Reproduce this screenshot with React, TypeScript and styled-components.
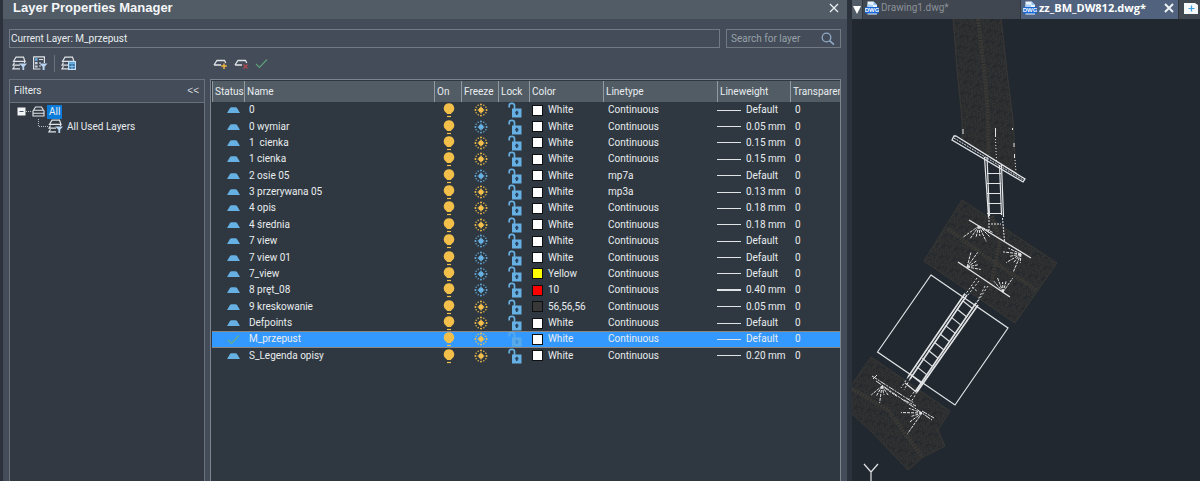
import React from "react";
import styled, { createGlobalStyle } from "styled-components";

const GlobalStyle = createGlobalStyle`
  *, *::before, *::after { box-sizing: border-box; }
  body {
    margin: 0;
    background: #2c323b;
    color: #e9ecef;
    font-family: Roboto, "Liberation Sans", sans-serif;
    font-size: 10px;
    line-height: 16px;
  }
  button, input { font: inherit; color: inherit; }
  svg { display: block; flex: none; }
`;

const Workspace = styled.main`
  display: flex;
  min-height: 100vh;
  padding-left: 3px;
  gap: 5px;
  overflow: hidden;
`;

const Palette = styled.section`
  flex: 1 1 844px;
  min-width: 0;
  display: flex;
  flex-direction: column;
  background: #434c58;
`;

const TitleBar = styled.header`
  display: flex;
  align-items: center;
  justify-content: space-between;
  height: 19px;
  padding: 0 8px 3px 10px;
  background: #515c66;
`;

const Title = styled.h1`
  margin: 0;
  font-family: "Liberation Sans", Arial, sans-serif;
  font-size: 13px;
  line-height: 16px;
  font-weight: 700;
  color: #f4f6f8;
`;

const IconButton = styled.button`
  display: flex;
  align-items: center;
  justify-content: center;
  padding: 0;
  border: 0;
  background: none;
  color: #eef1f4;
`;

const CollapseButton = styled(IconButton)`
  font-family: "Liberation Sans", sans-serif;
  color: #d3d8dc;
`;

const TopRow = styled.div`
  display: flex;
  gap: 6px;
  padding: 10px 6px 0;
`;

const CurrentLayer = styled.output`
  flex: 1;
  height: 19px;
  padding: 1px 1px;
  border: 1px solid #717a83;
`;

const SearchBox = styled.label`
  display: flex;
  align-items: center;
  width: 115px;
  height: 19px;
  padding: 0 5px 0 4px;
  border: 1px solid #717a83;
`;

const SearchInput = styled.input`
  flex: 1;
  min-width: 0;
  padding: 0;
  border: 0;
  outline: 0;
  background: none;
  &::placeholder { color: #98a0a9; opacity: 1; }
`;

const Columns = styled.div<{ $fill?: boolean }>`
  display: grid;
  grid-template-columns: 196px minmax(0, 1fr);
  column-gap: 5px;
  padding: 0 6px;
  flex: ${(p) => (p.$fill ? "1" : "none")};
`;

const ToolGroup = styled.div`
  display: flex;
  align-items: center;
  gap: 6px;
  height: 31px;
  padding-left: 3px;
`;

const Divider = styled.span`
  width: 1px;
  height: 17px;
  background: #68727c;
`;

const FilterPanel = styled.section`
  border: 1px solid #68717a;
  border-bottom: 0;
  background: #323943;
`;

const FilterHead = styled.header`
  display: flex;
  align-items: center;
  justify-content: space-between;
  height: 23px;
  padding: 0 5px 0 4px;
  border-bottom: 1px solid #68717a;
  background: #434c58;
`;

const FilterTitle = styled.h2`
  margin: 0;
  font-size: 10px;
  font-weight: 400;
`;

const Tree = styled.ul`
  margin: 0;
  padding: 1px 0 0 7px;
  list-style: none;
`;

const Branch = styled.ul`
  margin: 0;
  padding: 0 0 0 20px;
  list-style: none;
`;

const TreeRow = styled.div`
  display: flex;
  align-items: center;
  height: 15px;
`;

const NodeLabel = styled.span<{ $selected?: boolean }>`
  margin-left: 2px;
  padding: 0 2px;
  line-height: 14px;
  background: ${(p) => (p.$selected ? "#0c7cdb" : "transparent")};
`;

const GridPanel = styled.section`
  min-width: 0;
  padding: 1px 0 0 1px;
  border: 1px solid #7c858d;
  border-bottom: 0;
  background: #2f3840;
  overflow: hidden;
`;

const LayerTable = styled.table`
  width: 100%;
  height: 283px;
  table-layout: fixed;
  border-collapse: separate;
  border-spacing: 0;
  white-space: nowrap;
`;

const Col = styled.col<{ $w?: number }>`
  width: ${(p) => (p.$w ? `${p.$w}px` : "auto")};
`;

const HeadCell = styled.th`
  height: 21px;
  padding: 0 0 0 2px;
  border-left: 1px solid #929aa1;
  background: #515c65;
  font-weight: 400;
  text-align: left;
  overflow: hidden;
`;

const Cell = styled.td<{ $inset?: number }>`
  padding: 0 0 0 ${(p) => p.$inset ?? 5}px;
  line-height: 16px;
  white-space: pre;
  overflow: hidden;
`;

const Row = styled.tr<{ $current?: boolean }>`
  background: ${(p) => (p.$current ? "#3399ff" : "transparent")};

  ${Cell} {
    box-shadow: ${(p) => (p.$current ? "inset 0 1px #8c8580, inset 0 -1px #8c8580" : "none")};
  }
`;

const Inline = styled.span`
  display: flex;
  align-items: center;
  gap: 5px;
`;

const Swatch = styled.span<{ $color: string }>`
  width: 11px;
  height: 11px;
  border: 1px solid #0d0f11;
  background: ${(p) => p.$color};
`;

const Stroke = styled.span<{ $weight: number }>`
  width: 24px;
  height: ${(p) => p.$weight}px;
  background: #dfe3e6;
`;

const Viewer = styled.section`
  flex: 1 1 348px;
  min-width: 0;
  display: flex;
  flex-direction: column;
  background: #212830;
  overflow: hidden;
`;

const TabBar = styled.nav`
  display: flex;
  gap: 1px;
  height: 19px;
  background: #31373f;
`;

const TabMenu = styled(IconButton)`
  width: 10px;
  background: #515c66;
`;

const Tab = styled.div<{ $active?: boolean }>`
  display: flex;
  align-items: center;
  flex: 0 1 157px;
  min-width: 0;
  padding: 0 4px 3px 2px;
  background: ${(p) => (p.$active ? "#50627e" : "#414750")};
`;

const TabName = styled.button<{ $active?: boolean }>`
  flex: 1;
  display: flex;
  align-items: center;
  gap: 2px;
  padding: 0;
  border: 0;
  background: none;
  font-family: ${(p) => (p.$active ? '"Open Sans"' : "Roboto")}, sans-serif;
  font-size: ${(p) => (p.$active ? 11 : 10)}px;
  line-height: 16px;
  font-weight: ${(p) => (p.$active ? 700 : 400)};
  color: ${(p) => (p.$active ? "#ffffff" : "#8b9199")};
  white-space: nowrap;
`;

const NewTab = styled(IconButton)`
  flex: 1;
  justify-content: flex-start;
  padding: 0 0 3px 5px;
  background: #414750;
`;

type Layer = {
  name: string;
  frozen?: boolean;
  color?: string;
  hex?: string;
  linetype?: string;
  weight?: string;
  current?: boolean;
};

const layers: Layer[] = [
  { name: "0" },
  { name: "0 wymiar", frozen: true, weight: "0.05 mm" },
  { name: "1  cienka", weight: "0.15 mm" },
  { name: "1 cienka", weight: "0.15 mm" },
  { name: "2 osie 05", frozen: true, linetype: "mp7a" },
  { name: "3 przerywana 05", linetype: "mp3a", weight: "0.13 mm" },
  { name: "4 opis", weight: "0.18 mm" },
  { name: "4 średnia", weight: "0.18 mm" },
  { name: "7 view", frozen: true },
  { name: "7 view 01", frozen: true },
  { name: "7_view", frozen: true, color: "Yellow", hex: "#ffff00" },
  { name: "8 pręt_08", frozen: true, color: "10", hex: "#ff0000", weight: "0.40 mm" },
  { name: "9 kreskowanie", color: "56,56,56", hex: "#383838", weight: "0.05 mm" },
  { name: "Defpoints" },
  { name: "M_przepust", current: true },
  { name: "S_Legenda opisy", weight: "0.20 mm" },
];

const headings = ["Status", "Name", "On", "Freeze", "Lock", "Color", "Linetype", "Lineweight", "Transparency"];
const widths = [32, undefined, 27, 37, 31, 74, 114, 73, 50];

const AMBER = "#f3bf4b";
const SKY = "#66b0e3";

const CloseIcon = ({ bold }: { bold?: boolean }) => (
  <svg width="10" height="10" viewBox="0 0 10 10" stroke="currentColor" strokeWidth={bold ? 2 : 1.2}>
    <path d="M1 1L9 9M9 1L1 9" />
  </svg>
);

const SearchIcon = () => (
  <svg width="14" height="14" viewBox="0 0 14 14" fill="none" stroke="#8fa9c6" strokeWidth="1.3">
    <circle cx="5.5" cy="5.5" r="4.3" />
    <path d="M8.6 8.6L13 12.6" strokeWidth="1.6" />
  </svg>
);

const Stack = () => (
  <g fill="none" stroke="#dfe3e7" strokeWidth="1.2">
    <path d="M1.5 5.3H13L11.5 1.2H4L1.5 5.3Z" />
    <path d="M2.5 6.5L1 9.2H8M2.5 10.2L1 12.8H8M12.5 5.5V7" />
  </g>
);

const FilterIcon = () => (
  <svg width="15" height="15" viewBox="0 0 15 15">
    <Stack />
    <path d="M7 7.5H15L12.2 10.8V14H10.4V10.8Z" fill="#b8d4f0" />
  </svg>
);

const GroupFilterIcon = () => (
  <svg width="15" height="15" viewBox="0 0 15 15">
    <path d="M.6 .8H11.4V7M.6 .5V13H7.5" fill="none" stroke="#dfe3e7" strokeWidth="1.2" />
    <path d="M2 2.2H4.6V4.8H2Z" fill={SKY} />
    <path d="M2 6H4.6V8.2H2ZM2 9.4H4.6V11.6H2Z" fill="#c9d2da" />
    <path d="M6 3.5H10M6 7H8M6 10H8" stroke="#dfe3e7" strokeWidth="1.2" />
    <path d="M6.5 7.5H14.5L11.6 10.8V14H9.6V10.8Z" fill="#b8d4f0" />
  </svg>
);

const StatesIcon = () => (
  <svg width="15" height="15" viewBox="0 0 15 15">
    <Stack />
    <path d="M7.6 5.6H14.4V13.4H7.6Z" fill="#2f6fa6" stroke="#c6def4" strokeWidth="1.2" />
    <path d="M8 7.2H14" stroke={SKY} strokeWidth="1.8" />
    <path d="M8.5 10.5H13.5M11 8.5V13" stroke="#9ccbee" strokeWidth=".8" />
  </svg>
);

const NewLayerIcon = ({ remove }: { remove?: boolean }) => (
  <svg width="15" height="12" viewBox="0 0 15 12" fill="none">
    <path d="M1 7H8M1 7L4 2.5H11.5L12.8 5" stroke="#dfe3e7" strokeWidth="1.3" />
    {remove ? (
      <path d="M9.5 6.5L13.5 10.5M13.5 6.5L9.5 10.5" stroke="#b0484f" strokeWidth="1.3" />
    ) : (
      <path d="M11 5.5V11M8.2 8H13.8" stroke="#eeb440" strokeWidth="1.5" />
    )}
  </svg>
);

const CheckIcon = ({ color }: { color: string }) => (
  <svg width="13" height="11" viewBox="0 0 13 11" fill="none" stroke={color} strokeWidth="1.2">
    <path d="M1 6L4.5 9.5L12 1.5" />
  </svg>
);

const StatusIcon = () => (
  <svg width="13" height="16" viewBox="0 0 13 16">
    <path d="M0 11L3 6Q3.5 5.3 4.5 5.3H8.5Q9.5 5.3 10 6L13 11Z" fill={SKY} />
  </svg>
);

const BulbIcon = () => (
  <svg width="12" height="16" viewBox="0 0 12 16">
    <path d="M6 1.2A5.3 5.3 0 0 1 8.4 11.2L7.8 12H4.2L3.6 11.2A5.3 5.3 0 0 1 6 1.2Z" fill={AMBER} />
    <path d="M4 14.5H8" stroke={AMBER} strokeWidth="1.2" />
  </svg>
);

const FreezeIcon = ({ color }: { color: string }) => (
  <svg width="14" height="16" viewBox="0 0 14 16" fill={color}>
    <circle cx="7" cy="8" r="2.5" />
    <path d="M6.4 4.6H7.6V11.4H6.4ZM3.6 7.4H10.4V8.6H3.6Z" />
    {Array.from({ length: 12 }, (_, i) => {
      const a = (i * Math.PI) / 6;
      const r = i % 3 === 0 ? 0.95 : 0.75;
      return <circle key={i} cx={7 + 5.6 * Math.cos(a)} cy={8 + 5.6 * Math.sin(a)} r={r} />;
    })}
  </svg>
);

const LockIcon = ({ dim }: { dim?: boolean }) => (
  <svg width="14" height="16" viewBox="0 0 14 16" opacity={dim ? 0.75 : 1}>
    <path d="M1.2 5.5V3.5Q1.2 1.4 3.8 1.4Q6.5 1.4 6.5 3.5V7" fill="none" stroke={SKY} strokeWidth="1.7" />
    <path d="M4 6.5H13.5V15.5H4Z" fill={SKY} />
    <path d="M8.8 8.8V13M7.2 10.6H10.4" stroke={dim ? "#3f8fd8" : "#27405a"} strokeWidth="1.6" />
  </svg>
);

const LayersIcon = () => (
  <svg width="13" height="13" viewBox="0 0 13 13" fill="none" stroke="#e3e6e9" strokeWidth="1.1">
    <path d="M1.5 5.3L3.5 2H9.5L11.5 5.3ZM1 5.5V8.2H12V5.5M1 8V11H12V8" />
  </svg>
);

const ExpanderIcon = () => (
  <svg width="15" height="15" viewBox="0 0 15 15">
    <path d="M.5 3.5H8.5V11.5H.5Z" fill="#f2f4f5" />
    <path d="M2.5 7.5H6.5" stroke="#48556a" />
    <path d="M9 7.5H15" stroke="#b6bbc0" strokeDasharray="1 1" />
  </svg>
);

const ConnectorIcon = () => (
  <svg width="11" height="15" viewBox="0 0 11 15">
    <path d="M1.5 0V7.5H11" fill="none" stroke="#b6bbc0" strokeDasharray="1 1" />
  </svg>
);

const DwgIcon = () => (
  <svg width="14" height="14" viewBox="0 0 14 14">
    <path d="M2.5 .5H8.5L12 4V13.5H2.5Z" fill="#e9f3fd" />
    <path d="M8.5 .5V4H12Z" fill="#8fc0f2" />
    <path d="M2.5 3L8 4V7H2.5Z" fill="#a9cff5" />
    <rect y="6" width="14" height="6.5" rx="1" fill="#1767d6" />
    <text x="7" y="11.4" textAnchor="middle" fontFamily="Liberation Sans" fontWeight="700" fontSize="6" fill="#fff">
      DWG
    </text>
  </svg>
);

const NewTabIcon = () => (
  <svg width="14" height="11" viewBox="0 0 14 11">
    <path d="M0 0H11L14 2V11H0Z" fill="#f5f7f9" />
    <path d="M7.5 2.5V8.5M4.5 5.5H10.5" stroke="#3aa0e8" strokeWidth="1.2" />
  </svg>
);

type FanProps = { x: number; y: number; from: number; to: number; reach: number[] };

const Fan = ({ x, y, from, to, reach }: FanProps) => (
  <g>
    {reach.map((r, i) => {
      const a = ((from + ((to - from) * i) / (reach.length - 1)) * Math.PI) / 180;
      return <path key={i} d={`M${x} ${y}L${x + r * Math.cos(a)} ${y + r * Math.sin(a)}`} />;
    })}
  </g>
);

const rungsUpper = [173.5, 183.5, 193.5, 203.5, 213.5];

const ground = [
  "M953 18L957 70L962 119V139L1016 173L1013 120L1008 80L1001 18Z",
  "M962 200L1057 263L1015 323L924 261Z",
  "M871 357L950 411L938 430L945 446L923 457L908 470L870 430L851 413V386Z",
];

const Drawing = () => (
  <svg width="348" height="462" viewBox="852 19 348 462" fill="none" role="img" aria-label="Culvert plan">
    <defs>
      <pattern id="gravel" width="13" height="11" patternUnits="userSpaceOnUse" patternTransform="rotate(12)">
        <rect width="13" height="11" fill="#262a2e" />
        <g stroke="#373633" strokeWidth="1">
          <circle cx="2.5" cy="2.5" r="1.7" />
          <circle cx="8" cy="1.8" r="1.2" />
          <circle cx="11.5" cy="5" r="1.5" />
          <circle cx="6" cy="6" r="1.7" />
          <circle cx="1.5" cy="8" r="1.3" />
          <circle cx="9.5" cy="9" r="1.6" />
          <path d="M4 9.5H6M3.5 5H4.2" />
        </g>
      </pattern>
    </defs>
    <g fill="url(#gravel)" stroke="#393835" strokeWidth="1">
      {ground.map((d) => <path key={d} d={d} />)}
    </g>
    <g stroke="#3a3936" strokeWidth="4" strokeDasharray="2 1">
      <path d="M978 19L983 60L987 100L989 155" />
      <path d="M992 216L1000 240L990 290" />
      <path d="M948 229L985 256L1036 290" />
      <path d="M852 389L888 410L922 457" />
    </g>
    <g stroke="#e2e4e6" strokeWidth="1">
      <path d="M956 136L1025 179L1023 182L952 140L954 136Z" strokeWidth="1.3" />
      <path d="M954 138L1024 180.5" strokeDasharray="2 1" />
      <path d="M963 129V134M995.5 128V137M1012.5 128V130M1014 143V147M1014.5 154V158" />
      <path d="M995.5 139L996.5 161M1015 160L1016 172" strokeDasharray="1 2" />
      <path d="M984.5 157L988.5 217M987 157L989.5 216M999.5 165L1001.5 215M1001.5 165L1003.5 217" strokeWidth="1.2" />
      <path d="M989 217V233M1002.5 218L1004.5 241M991 224H1001" strokeDasharray="2 1" />
      {rungsUpper.map((y) => <path key={y} d={`M987 ${y}H1001`} />)}
      <path d="M969 220L1031 258M958 262L1010 297" strokeWidth="1.3" />
      <path d="M931 275L1008 328L955 405L877.5 352Z" strokeWidth="1.2" />
      <path d="M965 293.5L908 377M967 295L910 379M976 303L915 392M978 305L917 392" strokeWidth="1.6" />
      <path
        d="M977 278L965 295M979 281L967 296M988 286L976 304M985 286L977 302M908 377L901 388M910 379L904 390M917 392L911 402M914 392L908 400M972 287L978 292"
        strokeDasharray="2 2"
      />
      {Array.from({ length: 11 }, (_, i) => (
        <path key={i} d={`M${963 - i * 5.8} ${301 + i * 8.2}l10 8`} strokeWidth="1.2" />
      ))}
      <path
        d="M872 376L914 403M876 381L932 420M904 400L916 406M922 411L934 418M873 379L877 375"
        strokeDasharray="6 1 2 1"
      />
      <g strokeDasharray="3 1">
        <Fan x={979} y={226} from={25} to={145} reach={[16, 15, 17, 10, 12, 15, 19]} />
        <Fan x={1021} y={254} from={95} to={205} reach={[9, 20, 12, 17, 12, 18, 14]} />
        <Fan x={967} y={267} from={-75} to={10} reach={[15, 18, 12, 11, 14]} />
        <Fan x={1003} y={292} from={-130} to={-55} reach={[14, 16, 10, 12, 17]} />
        <Fan x={882} y={386} from={35} to={140} reach={[18, 12, 9, 17, 11, 14]} />
        <Fan x={922} y={413} from={125} to={200} reach={[25, 15, 12, 21, 14]} />
      </g>
      <path d="M864 464L871 472L878 464M871 472V481" strokeWidth="1.2" />
    </g>
  </svg>
);

const LayerRow = ({ layer }: { layer: Layer }) => (
  <Row $current={layer.current} aria-selected={layer.current}>
    <Cell $inset={15}>{layer.current ? <CheckIcon color="#66ae86" /> : <StatusIcon />}</Cell>
    <Cell>{layer.name}</Cell>
    <Cell $inset={9}><BulbIcon /></Cell>
    <Cell $inset={13}><FreezeIcon color={layer.frozen ? SKY : AMBER} /></Cell>
    <Cell $inset={10}><LockIcon dim={layer.current} /></Cell>
    <Cell $inset={3}>
      <Inline>
        <Swatch $color={layer.hex ?? "#ffffff"} />
        {layer.color ?? "White"}
      </Inline>
    </Cell>
    <Cell>{layer.linetype ?? "Continuous"}</Cell>
    <Cell $inset={0}>
      <Inline>
        <Stroke $weight={layer.weight === "0.40 mm" ? 2 : 1} />
        {layer.weight ?? "Default"}
      </Inline>
    </Cell>
    <Cell>0</Cell>
  </Row>
);

export default function App() {
  return (
    <>
      <GlobalStyle />
      <Workspace>
        <Palette>
          <TitleBar>
            <Title>Layer Properties Manager</Title>
            <IconButton aria-label="Close palette"><CloseIcon /></IconButton>
          </TitleBar>
          <TopRow>
            <CurrentLayer>Current Layer: M_przepust</CurrentLayer>
            <SearchBox>
              <SearchInput placeholder="Search for layer" aria-label="Search for layer" />
              <SearchIcon />
            </SearchBox>
          </TopRow>
          <Columns>
            <ToolGroup>
              <IconButton aria-label="New property filter"><FilterIcon /></IconButton>
              <IconButton aria-label="New group filter"><GroupFilterIcon /></IconButton>
              <Divider />
              <IconButton aria-label="Layer states"><StatesIcon /></IconButton>
            </ToolGroup>
            <ToolGroup>
              <IconButton aria-label="New layer"><NewLayerIcon /></IconButton>
              <IconButton aria-label="Delete layer"><NewLayerIcon remove /></IconButton>
              <IconButton aria-label="Set current"><CheckIcon color="#5f9f78" /></IconButton>
            </ToolGroup>
          </Columns>
          <Columns $fill>
            <FilterPanel>
              <FilterHead>
                <FilterTitle>Filters</FilterTitle>
                <CollapseButton aria-label="Collapse filters">&lt;&lt;</CollapseButton>
              </FilterHead>
              <Tree>
                <li>
                  <TreeRow>
                    <ExpanderIcon />
                    <LayersIcon />
                    <NodeLabel $selected>All</NodeLabel>
                  </TreeRow>
                  <Branch>
                    <li>
                      <TreeRow>
                        <ConnectorIcon />
                        <FilterIcon />
                        <NodeLabel>All Used Layers</NodeLabel>
                      </TreeRow>
                    </li>
                  </Branch>
                </li>
              </Tree>
            </FilterPanel>
            <GridPanel>
              <LayerTable>
                <colgroup>
                  {widths.map((w, i) => <Col key={i} $w={w} />)}
                </colgroup>
                <thead>
                  <tr>{headings.map((h) => <HeadCell key={h} scope="col">{h}</HeadCell>)}</tr>
                </thead>
                <tbody>
                  {layers.map((l) => <LayerRow key={l.name} layer={l} />)}
                </tbody>
              </LayerTable>
            </GridPanel>
          </Columns>
        </Palette>
        <Viewer>
          <TabBar>
            <TabMenu aria-label="Open drawings">
              <svg width="8" height="8" viewBox="0 0 8 8"><path d="M0 0H8L4 8Z" fill="#fff" /></svg>
            </TabMenu>
            <Tab>
              <TabName><DwgIcon />Drawing1.dwg*</TabName>
            </Tab>
            <Tab $active>
              <TabName $active><DwgIcon />zz_BM_DW812.dwg*</TabName>
              <IconButton aria-label="Close drawing"><CloseIcon bold /></IconButton>
            </Tab>
            <NewTab aria-label="New drawing"><NewTabIcon /></NewTab>
          </TabBar>
          <Drawing />
        </Viewer>
      </Workspace>
    </>
  );
}
